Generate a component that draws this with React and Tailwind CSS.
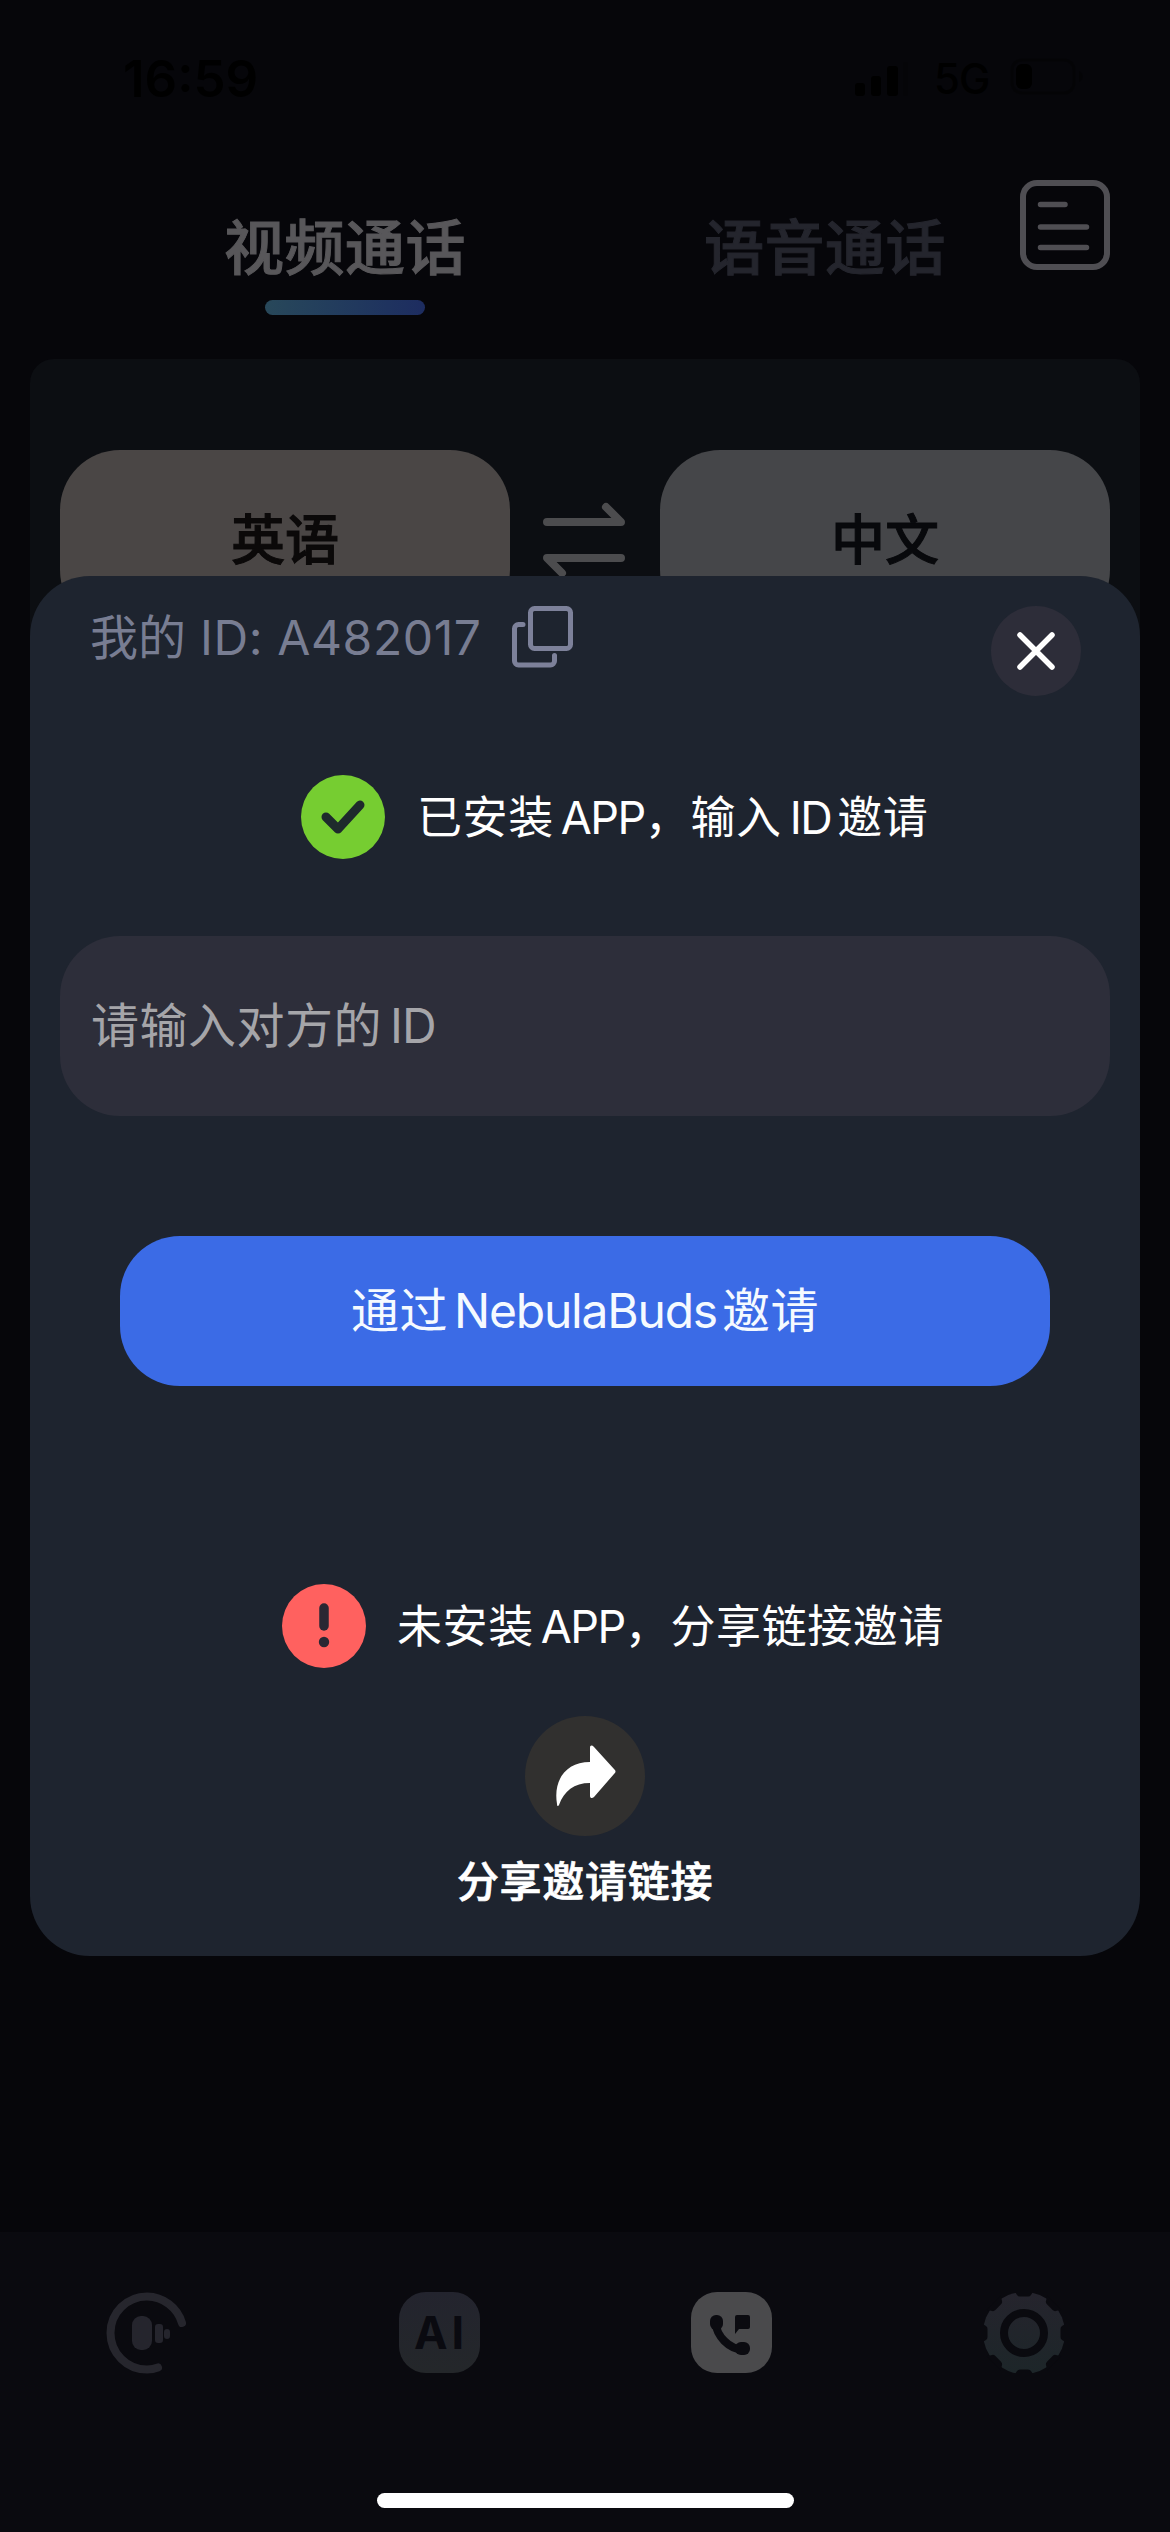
const Latin = ({ children, className = "" }) => (
  <span className={`inline-block whitespace-pre ${className}`}>{children}</span>
);

function StatusBar() {
  return (
    <div className="flex h-[156px] items-start pt-[49px] text-black">
      <div className="ml-[123px] h-[58px] w-[141px] text-[51px] leading-[60px] font-semibold">16:59</div>
      <svg className="mt-[10px] ml-[590px] h-10 w-[56px]" viewBox="0 0 56 40" fill="currentColor">
        <rect x="1" y="24" width="10" height="13" rx="3" />
        <rect x="17" y="17" width="10" height="20" rx="3" />
        <rect x="33" y="7" width="11" height="30" rx="3" />
        <rect x="49" y="3" width="5" height="34" rx="2" opacity=".15" />
      </svg>
      <div className="ml-[24px] w-[60px] text-[42px] leading-[60px] font-medium tracking-[-1px]">5G</div>
      <svg className="mt-[8px] ml-[16px] h-10 w-[76px]" viewBox="0 0 76 40" fill="none">
        <rect x="2" y="3" width="62" height="33" rx="10" stroke="currentColor" strokeWidth="3" opacity=".3" />
        <rect x="6" y="7" width="16" height="25" rx="6" fill="currentColor" />
        <path d="M69 14c5 2 5 9 0 11z" fill="currentColor" opacity=".3" />
      </svg>
    </div>
  );
}

function Header() {
  return (
    <div className="flex h-[203px]">
      <div className="ml-[105px] flex w-[480px] flex-col items-center pt-[48px] text-[#58575a]">
        <div className="text-[60px] leading-[88px] font-medium tracking-[0.5px] [-webkit-text-stroke:1px_#58575a]">视频通话</div>
        <div className="mt-[8px] h-[15px] w-[160px] rounded-full bg-linear-to-r from-[#28485a] to-[#1d2c60]" />
      </div>
      <div className="w-[480px] pt-[48px] text-center text-[60px] leading-[88px] font-medium tracking-[0.5px] text-[#24252d] [-webkit-text-stroke:1px_#24252d]">语音通话</div>
      <svg className="mt-6 -ml-[45px] h-[90px] w-[90px]" viewBox="0 0 90 90" fill="none" stroke="#4f4e53" strokeWidth="6" strokeLinecap="round">
        <rect x="3" y="3" width="84" height="84" rx="14" />
        <path d="M20.500 24.500h24.500M20.500 47h46M20.500 67.500h46" strokeWidth="5.500" />
      </svg>
    </div>
  );
}

function Languages() {
  return (
    <div className="mx-[30px] flex h-[900px] rounded-t-[24px] bg-[#0c0e12] px-[30px] pt-[91px]">
      <div className="flex h-[180px] w-[450px] items-center justify-center rounded-[60px] bg-[#4a4645] text-[54px] font-medium text-[#0b0909] [-webkit-text-stroke:1px_#0b0909]">英语</div>
      <svg className="mx-[33px] mt-[51px] h-[78px] w-[84px]" viewBox="0 0 84 78" fill="none" stroke="#4c4c4e" strokeWidth="8" strokeLinecap="round" strokeLinejoin="round">
        <path d="M4 21H78L63 6M78 57H4L19 72" />
      </svg>
      <div className="flex h-[180px] w-[450px] items-center justify-center rounded-[60px] bg-[#454649] text-[54px] font-medium text-[#08090c] [-webkit-text-stroke:1px_#08090c]">中文</div>
    </div>
  );
}

function Modal() {
  return (
    <section className="absolute top-[576px] left-[30px] flex h-[1380px] w-[1110px] flex-col rounded-[60px] bg-[#1e242f]">
      <div className="flex h-[199px] items-start pt-[30px] pl-[60px]">
        <div className="w-[392px] pt-px text-[48px] leading-[62px] whitespace-nowrap text-[#787d92]">
          我的<Latin className="ml-[14px] tracking-[0.6px]">ID: A482017</Latin>
        </div>
        <svg className="ml-[30px] h-[62px] w-[62px]" viewBox="0 0 62 62" fill="none" stroke="#7d819a" strokeWidth="5" strokeLinecap="round">
          <rect x="18.500" y="2.500" width="40" height="40" rx="4" />
          <path d="M11 18.500H6.500a4 4 0 0 0-4 4v32.500a4 4 0 0 0 4 4H38.500a4 4 0 0 0 4-4V49.500" />
        </svg>
        <button className="ml-[417px] flex h-[90px] w-[90px] items-center justify-center rounded-full bg-[#2d2d39]">
          <svg className="h-[38px] w-[38px]" viewBox="0 0 38 38" stroke="white" strokeWidth="5.500" strokeLinecap="round"><path d="M3 3 35 35M35 3 3 35" /></svg>
        </button>
      </div>
      <div className="flex h-[84px] items-center pl-[271px] text-[45px] text-white">
        <svg className="mr-[32px] h-[84px] w-[84px]" viewBox="0 0 84 84" fill="none">
          <circle cx="42" cy="42" r="42" fill="#76cd31" />
          <path d="M25 42 37 54 59 30" stroke="#1e2a2c" strokeWidth="9" strokeLinecap="round" strokeLinejoin="round" />
        </svg>
        <div className="pt-[2px] leading-[60px] tracking-[0.6px] whitespace-nowrap">已安装<Latin className="ml-[7px] tracking-[-1.5px]">APP</Latin>，输入<Latin className="mr-[6px] ml-[8px] tracking-[-1.5px]">ID</Latin>邀请</div>
      </div>
      <div className="mx-[30px] mt-[77px] flex h-[180px] items-center rounded-[60px] bg-[#2d2e3a] pl-[31px] text-[48px] text-[#a5a5a9]">
        <div className="leading-[62px] tracking-[0.5px]">请输入对方的<Latin className="ml-[8px] tracking-[-1px]">ID</Latin></div>
      </div>
      <button className="mx-[90px] mt-[120px] flex h-[150px] items-center justify-center rounded-[60px] bg-[#3b6be6] text-[48px] whitespace-nowrap text-[#f5faff]">
        <span className="tracking-[0.5px]">通过<Latin className="mr-[5px] ml-[6px] tracking-[-1.2px]">NebulaBuds</Latin>邀请</span>
      </button>
      <div className="mt-[198px] flex h-[84px] items-center pl-[252px] text-[45px] text-white">
        <svg className="mr-[31px] h-[84px] w-[84px]" viewBox="0 0 84 84" fill="none">
          <circle cx="42" cy="42" r="42" fill="#ff615f" />
          <path d="M42 24V42" stroke="#2a2733" strokeWidth="9.500" strokeLinecap="round" />
          <circle cx="42" cy="58" r="5.200" fill="#2a2733" />
        </svg>
        <div className="pt-[2px] leading-[60px] tracking-[0.6px] whitespace-nowrap">未安装<Latin className="ml-[7px] tracking-[-1.5px]">APP</Latin>，分享链接邀请</div>
      </div>
      <div className="mt-[48px] flex flex-col items-center">
        <div className="flex h-[120px] w-[120px] items-center justify-center rounded-full bg-[#31302f]">
          <svg className="h-[62px] w-[62px]" viewBox="0 0 62 62" fill="white">
            <path d="M36 3c0-3 2-3 4-1L60 24c2 2 2 3 0 5L40 52c-2 2-4 1-4-1V38C20 38 10 46 5 60c-1 2-2 1-2-1C-1 35 12 17 36 17z" />
          </svg>
        </div>
        <div className="mt-[15px] text-[42px] leading-[62px] font-medium tracking-[0.7px] text-white [-webkit-text-stroke:0.7px_white]">分享邀请链接</div>
      </div>
    </section>
  );
}

const teeth = [0, 45, 90, 135, 180, 225, 270, 315];

function TabBar() {
  return (
    <nav className="mt-[973px] flex h-[300px] items-start bg-[#0a0a0f] pt-[60px] pl-[106px]">
      <svg className="h-[82px] w-[82px]" viewBox="0 0 82 82" fill="none">
        <path d="M76 31A37 37 0 0 0 41 4.500A36.500 36.500 0 0 0 41 77.500Q47 77.500 52 75.500" stroke="#26262d" strokeWidth="8" strokeLinecap="round" />
        <rect x="26" y="24" width="20" height="34" rx="9" fill="#25252d" />
        <rect x="49" y="32" width="8" height="19" rx="3" fill="#25252d" />
        <rect x="58" y="37" width="6" height="10" rx="3" fill="#25252d" />
      </svg>
      <div className="ml-[211px] flex h-[81px] w-[81px] items-center justify-center rounded-[27px] bg-linear-to-b from-[#23242e] to-[#24272a] text-[45px] font-bold tracking-[4px] text-[#0a0a10]">
        <span className="-mr-[3px]">AI</span>
      </div>
      <svg className="ml-[211px] h-[81px] w-[81px]" viewBox="0 0 81 81">
        <rect width="81" height="81" rx="26" fill="#4a4a4c" />
        <path d="M24 30C26 44 37 57 53 58" stroke="#0b0b10" strokeWidth="8" fill="none" />
        <rect x="19" y="23" width="13" height="15" rx="6" fill="#0b0b10" />
        <rect x="44" y="50" width="15" height="13" rx="6" fill="#0b0b10" />
        <path d="M46 23h11q2 0 2 2v10q0 2-2 2h-9l-4 5V25q0-2 2-2z" fill="#0b0b10" />
      </svg>
      <svg className="ml-[211px] h-[82px] w-[82px]" viewBox="0 0 82 82">
        <defs>
          <linearGradient id="gear" x1="0" y1="0" x2="0" y2="1"><stop stopColor="#25242d" /><stop offset="1" stopColor="#1d2629" /></linearGradient>
        </defs>
        <circle cx="41" cy="41" r="41" fill="url(#gear)" />
        {teeth.map((a) => <path key={a} d="M31 -2 34 3Q35 4.500 37 4.500H45Q47 4.500 48 3L51 -2z" fill="#0a0a0f" transform={`rotate(${a} 41 41)`} />)}
        <circle cx="41" cy="41" r="20" fill="none" stroke="#0a0a0f" strokeWidth="8" />
      </svg>
    </nav>
  );
}

export default function App() {
  return (
    <main className="relative flex h-[2532px] w-[1170px] flex-col overflow-hidden bg-[#06060a] font-[Inter,'Noto_Sans_CJK_SC',sans-serif]">
      <StatusBar />
      <Header />
      <Languages />
      <TabBar />
      <Modal />
      <div className="absolute bottom-[24px] left-[377px] h-[15px] w-[417px] rounded-full bg-white" />
    </main>
  );
}
